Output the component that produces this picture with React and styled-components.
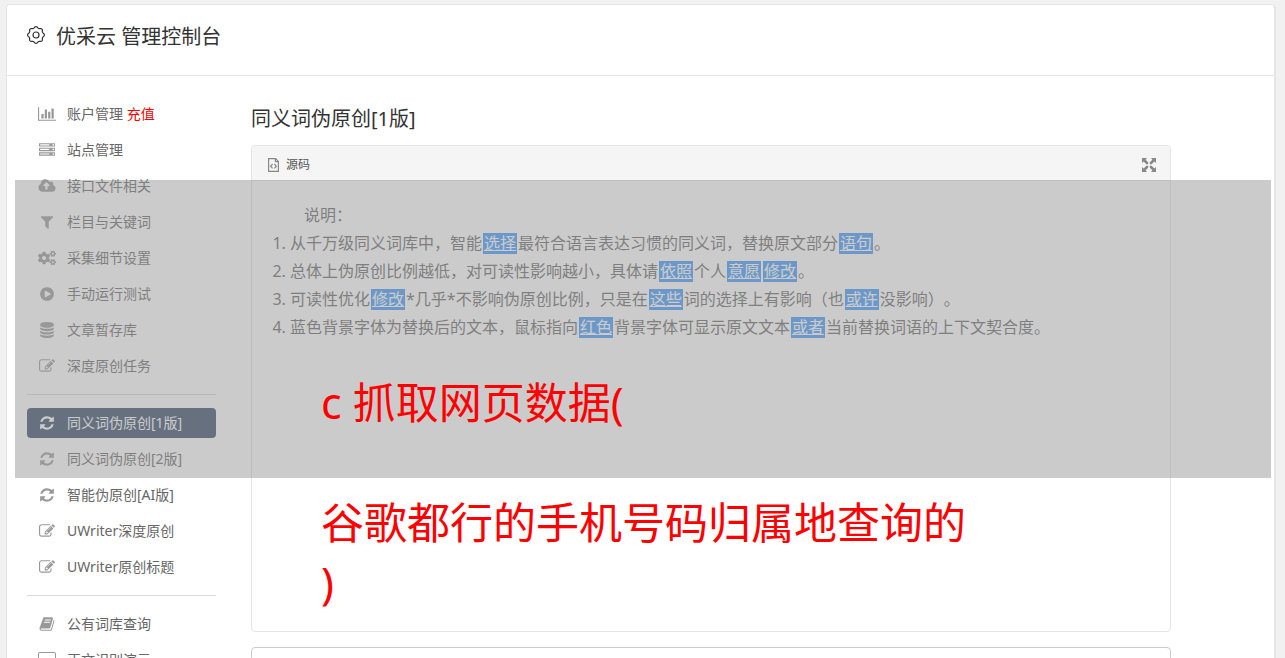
import React from "react";
import styled, { createGlobalStyle, css } from "styled-components";
import { FaCogs } from "react-icons/fa";

const GlobalStyle = createGlobalStyle`
  *, *::before, *::after { box-sizing: border-box; }
  html, body { margin: 0; height: 100%; overflow: hidden; }
  body {
    background: #f1f1f1;
    color: #666;
    font-family: "Noto Sans", "Noto Sans CJK SC", sans-serif;
    font-size: 14px;
    line-height: 20px;
    text-spacing-trim: space-all;
  }
`;

const Page = styled.div`
  position: relative;
  height: 100vh;
  padding: 4px 9px 0 6px;
  overflow: hidden;
`;

const Panel = styled.div`
  min-height: 100%;
  background: #fff;
  border: 1px solid #e5e5e5;
  border-right-width: 2px;
  border-radius: 4px 4px 0 0;
`;

const Header = styled.header`
  display: flex;
  align-items: center;
  gap: 11px;
  height: 71px;
  padding: 0 20px 10px;
  border-bottom: 1px solid #e5e5e5;
  color: #333;
`;

const Brand = styled.h1`
  margin: 0;
  padding-top: 3px;
  font-size: 20px;
  font-weight: 400;
  line-height: 28px;
`;

const Body = styled.div`
  display: flex;
  align-items: flex-start;
  gap: 35px;
  padding: 23px 20px 0;
`;

const Sidebar = styled.nav`
  flex: 0 0 189px;
`;

const Menu = styled.ul`
  margin: 0;
  padding: 0;
  list-style: none;
`;

const Divider = styled.li`
  height: 1px;
  margin: 13px 0;
  background: #dbdbdb;
`;

const MenuLink = styled.a`
  display: flex;
  align-items: center;
  gap: 10px;
  height: 30px;
  margin-bottom: 6px;
  padding: 0 10px;
  border-radius: 4px;
  color: ${(p) => (p.$active ? "#fff" : "#666")};
  background: ${(p) => (p.$active ? "#354967" : "transparent")};
  text-decoration: none;
  white-space: nowrap;

  svg {
    color: ${(p) => (p.$active ? "#fff" : "#999")};
  }
`;

const IconSlot = styled.span`
  display: flex;
  justify-content: center;
  flex: 0 0 20px;
`;

const Hot = styled.span`
  color: #f00;
`;

const Glyph = styled.svg`
  display: block;
  flex: none;
  fill: currentColor;
`;

const Content = styled.main`
  flex: 1 1 auto;
  min-width: 0;
  max-width: 920px;
  padding-top: 6px;
`;

const Title = styled.h2`
  margin: 0 0 12px;
  color: #333;
  font-size: 20px;
  font-weight: 400;
  line-height: 28px;
`;

const frame = css`
  border: 1px solid #e5e5e5;
  border-radius: 4px;
`;

const Editor = styled.section`
  ${frame}
  overflow: hidden;
`;

const Toolbar = styled.div`
  display: flex;
  align-items: center;
  justify-content: space-between;
  height: 35px;
  padding: 3px 14px 0 16px;
  background: #f5f5f5;
  border-bottom: 1px solid #e5e5e5;
`;

const ToolButton = styled.button`
  display: flex;
  align-items: center;
  gap: 7px;
  padding: 0;
  border: 0;
  background: none;
  color: #555;
  font: inherit;
  font-size: 12px;

  svg {
    color: #888;
  }
`;

const Document = styled.div`
  min-height: 450px;
  padding: 20px;
  font-size: 16px;
  line-height: 28px;
`;

const Lead = styled.p`
  margin: 0;
  text-indent: 2em;
`;

const Notes = styled.ol`
  margin: 0;
  padding-left: 18px;
`;

const Swap = styled.u`
  display: inline-block;
  margin: 0 1px;
  padding: 0 1px;
  background: #4199fb;
  color: #fff;
  line-height: 21px;
`;

const Result = styled.textarea`
  ${frame}
  display: block;
  width: 100%;
  height: 120px;
  margin-top: 15px;
  border-color: #ccc;
  resize: none;
`;

const Shade = styled.div`
  position: absolute;
  top: 180px;
  left: 15px;
  right: 14px;
  height: 298px;
  background: rgba(151, 151, 151, 0.5);
  pointer-events: none;
`;

const Caption = styled.div`
  position: absolute;
  top: 373px;
  left: 321px;
  color: #f00;
  font-size: 43px;
  line-height: 60px;
  pointer-events: none;

  p {
    margin: 0 0 60px;
  }
`;

const shapes = {
  chart: ["0 0 2048 1792", "M640 896v512h-256v-512h256zm384-512v1024h-256v-1024h256zm1024 1152v128h-2048v-1536h128v1408h1920zm-640-896v768h-256v-768h256zm384-384v1152h-256v-1152h256z", 18],
  server: ["0 0 1792 1792", "M128 1408h1024v-128h-1024v128zm0-512h1024v-128h-1024v128zm1568 448q0-40-28-68t-68-28-68 28-28 68 28 68 68 28 68-28 28-68zm-1568-960h1024v-128h-1024v128zm1568 448q0-40-28-68t-68-28-68 28-28 68 28 68 68 28 68-28 28-68zm0-512q0-40-28-68t-68-28-68 28-28 68 28 68 68 28 68-28 28-68zm96 832v384h-1792v-384h1792zm0-512v384h-1792v-384h1792zm0-512v384h-1792v-384h1792z", 16],
  upload: ["-64 0 1920 1792", "M1216 864q0-14-9-23l-352-352q-9-9-23-9t-23 9l-351 351q-10 12-10 24 0 14 9 23t23 9h224v352q0 13 9.5 22.5t22.5 9.5h192q13 0 22.5-9.5t9.5-22.5v-352h224q13 0 22.5-9.5t9.5-22.5zm640 288q0 159-112.5 271.5t-271.5 112.5h-1088q-185 0-316.5-131.5t-131.5-316.5q0-130 70-240t188-165q-2-30-2-43 0-212 150-362t362-150q156 0 285.5 87t188.5 231q71-62 166-62 106 0 181 75t75 181q0 76-41 138 130 31 213.5 135.5t83.5 238.5z", 18],
  filter: ["0 0 1792 1792", "M1595 295q17 41-14 70l-493 493v742q0 42-39 59-13 5-25 5-27 0-45-19l-256-256q-19-19-19-45v-486l-493-493q-31-29-14-70 17-39 59-39h1280q42 0 59 39z", 16],
  play: ["0 0 1792 1792", "M896 128q209 0 385.5 103t279.5 279.5 103 385.5-103 385.5-279.5 279.5-385.5 103-385.5-103-279.5-279.5-103-385.5 103-385.5 279.5-279.5 385.5-103zm384 823q32-18 32-55t-32-55l-544-320q-31-19-64-1-32 19-32 56v640q0 37 32 56 16 8 32 8 17 0 32-9z", 16],
  database: ["0 0 1792 1792", "M896 768q237 0 443-43t325-127v170q0 69-103 128t-280 93.5-385 34.5-385-34.5-280-93.5-103-128v-170q119 84 325 127t443 43zm0 768q237 0 443-43t325-127v170q0 69-103 128t-280 93.5-385 34.5-385-34.5-280-93.5-103-128v-170q119 84 325 127t443 43zm0-384q237 0 443-43t325-127v170q0 69-103 128t-280 93.5-385 34.5-385-34.5-280-93.5-103-128v-170q119 84 325 127t443 43zm0-1152q208 0 385 34.5t280 93.5 103 128v128q0 69-103 128t-280 93.5-385 34.5-385-34.5-280-93.5-103-128v-128q0-69 103-128t280-93.5 385-34.5z", 16],
  edit: ["0 0 1792 1792", "M888 1184l116-116-152-152-116 116v56h96v96h56zm440-720q-16-16-33 1l-350 350q-17 17-1 33t33-1l350-350q17-17 1-33zm80 594v190q0 119-84.5 203.5t-203.5 84.5h-832q-119 0-203.5-84.5t-84.5-203.5v-832q0-119 84.5-203.5t203.5-84.5h832q63 0 117 25 15 7 18 23 3 17-9 29l-49 49q-14 14-32 8-23-6-45-6h-832q-66 0-113 47t-47 113v832q0 66 47 113t113 47h832q66 0 113-47t47-113v-126q0-13 9-22l64-64q15-15 35-7t20 29zm-96-738l288 288-672 672h-288v-288zm444 132l-92 92-288-288 92-92q28-28 68-28t68 28l152 152q28 28 28 68t-28 68z", 16],
  refresh: ["-128 0 1792 1792", "M1511 1056q0 5-1 7-64 268-268 434.5t-478 166.5q-146 0-282.5-55t-243.5-157l-129 129q-19 19-45 19t-45-19-19-45v-448q0-26 19-45t45-19h448q26 0 45 19t19 45-19 45l-137 137q71 66 161 102t187 36q134 0 250-65t186-179q11-17 53-117 8-23 30-23h192q13 0 22.5 9.5t9.5 22.5zm25-800v448q0 26-19 45t-45 19h-448q-26 0-45-19t-19-45 19-45l138-138q-148-137-349-137-134 0-250 65t-186 179q-11 17-53 117-8 23-30 23h-199q-13 0-22.5-9.5t-9.5-22.5v-7q65-268 270-434.5t480-166.5q146 0 284 55.5t245 156.5l130-129q19-19 45-19t45 19 19 45z", 16],
  book: ["0 0 1792 1792", "M1703 478q40 57 18 129l-275 906q-19 64-76.5 107.5t-122.5 43.5h-923q-77 0-148.5-53.5t-99.5-131.5q-24-67-2-127 0-4 3-27t4-37q1-8-3-21.5t-3-19.5q2-11 8-21t16.5-23.5 16.5-23.5q23-38 45-91.5t30-91.5q3-10 .5-30t-.5-28q3-11 17-28t17-23q21-36 42-92t25-90q1-9-2.5-32t.5-28q4-13 22-30.5t22-22.5q19-26 42.5-84.5t27.5-96.5q1-8-3-25.5t-2-26.5q2-8 9-18t18-23 17-21q8-12 16.5-30.5t15-35 16-36 19.5-32 26.5-23.5 36-11.5 47.5 5.5l-1 3q38-9 51-9h761q74 0 114 56t18 130l-274 906q-36 119-71.5 153.5t-128.5 34.5h-869q-27 0-38 15-11 16-1 43 24 70 144 70h923q29 0 56-15.5t35-41.5l300-987q7-22 5-57 38 15 59 43zm-1064 2q-4 13 2 22.5t20 9.5h608q13 0 25.5-9.5t16.5-22.5l21-64q4-13-2-22.5t-20-9.5h-608q-13 0-25.5 9.5t-16.5 22.5zm-83 256q-4 13 2 22.5t20 9.5h608q13 0 25.5-9.5t16.5-22.5l21-64q4-13-2-22.5t-20-9.5h-608q-13 0-25.5 9.5t-16.5 22.5z", 16],
  screen: ["0 0 18 16", "M2 0h14q2 0 2 2v9q0 2-2 2h-5v1h2v1H5v-1h2v-1H2q-2 0-2-2V2q0-2 2-2zm0 1q-1 0-1 1v9q0 1 1 1h14q1 0 1-1V2q0-1-1-1z", 18],
};

function Icon({ name }) {
  if (name === "cogs") return <FaCogs size={18} aria-hidden="true" />;
  const [viewBox, d, width] = shapes[name];
  return (
    <Glyph viewBox={viewBox} width={width} height={16} aria-hidden="true">
      <path d={d} />
    </Glyph>
  );
}

const gearOutline =
  Array.from({ length: 96 }, (_, i) => {
    const a = (i / 96) * Math.PI * 2;
    const r = 7.7 + 0.7 * Math.cos(8 * a);
    return `${i ? "L" : "M"}${(9 + r * Math.cos(a)).toFixed(2)} ${(9 + r * Math.sin(a)).toFixed(2)}`;
  }).join("") + "Z";

function GearLogo() {
  return (
    <svg width="18" height="18" viewBox="0 0 18 18" fill="none" stroke="currentColor" strokeWidth="1.2" aria-hidden="true">
      <path d={gearOutline} />
      <circle cx="9" cy="9" r="3" />
    </svg>
  );
}

const groups = [
  [
    { icon: "chart", label: "账户管理", hot: "充值" },
    { icon: "server", label: "站点管理" },
    { icon: "upload", label: "接口文件相关" },
    { icon: "filter", label: "栏目与关键词" },
    { icon: "cogs", label: "采集细节设置" },
    { icon: "play", label: "手动运行测试" },
    { icon: "database", label: "文章暂存库" },
    { icon: "edit", label: "深度原创任务" },
  ],
  [
    { icon: "refresh", label: "同义词伪原创[1版]", active: true },
    { icon: "refresh", label: "同义词伪原创[2版]" },
    { icon: "refresh", label: "智能伪原创[AI版]" },
    { icon: "edit", label: "UWriter深度原创" },
    { icon: "edit", label: "UWriter原创标题" },
  ],
  [
    { icon: "book", label: "公有词库查询" },
    { icon: "screen", label: "正文识别演示" },
  ],
];

export default function App() {
  return (
    <Page>
      <GlobalStyle />
      <Panel>
        <Header>
          <GearLogo />
          <Brand>优采云 管理控制台</Brand>
        </Header>
        <Body>
          <Sidebar>
            <Menu>
              {groups.map((items, g) => (
                <React.Fragment key={g}>
                  {g > 0 && <Divider role="separator" />}
                  {items.map((item) => (
                    <li key={item.label}>
                      <MenuLink href="#" $active={item.active}>
                        <IconSlot><Icon name={item.icon} /></IconSlot>
                        <span>
                          {item.label}
                          {item.hot && <> <Hot>{item.hot}</Hot></>}
                        </span>
                      </MenuLink>
                    </li>
                  ))}
                </React.Fragment>
              ))}
            </Menu>
          </Sidebar>
          <Content>
            <Title>同义词伪原创[1版]</Title>
            <Editor>
              <Toolbar>
                <ToolButton type="button">
                  <svg width="11" height="14" viewBox="0 0 11 14" fill="none" stroke="currentColor" strokeWidth="1.2" aria-hidden="true">
                    <path d="M.6.6h7l2.8 2.8v10H.6zM7.4.6v3h3M4.6 6 2.6 8.2l2 2.2M6.4 6l2 2.2-2 2.2" />
                  </svg>
                  源码
                </ToolButton>
                <ToolButton type="button" aria-label="全屏">
                  <Glyph width="14" height="14" viewBox="0 0 14 14" aria-hidden="true">
                    <path d="M0 0h5L3.6 1.7 6.2 4.3v1.9H4.3L1.7 3.6 0 5zM14 0v5l-1.7-1.4-2.6 2.6H7.8V4.3l2.6-2.6L9 0zM0 14V9l1.7 1.4 2.6-2.6h1.9v1.9l-2.6 2.6L5 14zM14 14H9l1.4-1.7-2.6-2.6V7.8h1.9l2.6 2.6L14 9z" />
                  </Glyph>
                </ToolButton>
              </Toolbar>
              <Document>
                <Lead>说明：</Lead>
                <Notes>
                  <li>从千万级同义词库中，智能<Swap>选择</Swap>最符合语言表达习惯的同义词，替换原文部分<Swap>语句</Swap>。</li>
                  <li>总体上伪原创比例越低，对可读性影响越小，具体请<Swap>依照</Swap>个人<Swap>意愿</Swap><Swap>修改</Swap>。</li>
                  <li>可读性优化<Swap>修改</Swap>*几乎*不影响伪原创比例，只是在<Swap>这些</Swap>词的选择上有影响（也<Swap>或许</Swap>没影响）。</li>
                  <li>蓝色背景字体为替换后的文本，鼠标指向<Swap>红色</Swap>背景字体可显示原文文本<Swap>或者</Swap>当前替换词语的上下文契合度。</li>
                </Notes>
              </Document>
            </Editor>
            <Result aria-label="原文" />
          </Content>
        </Body>
      </Panel>
      <Shade />
      <Caption>
        <p>c 抓取网页数据(</p>
        <div>谷歌都行的手机号码归属地查询的<br />)</div>
      </Caption>
    </Page>
  );
}
